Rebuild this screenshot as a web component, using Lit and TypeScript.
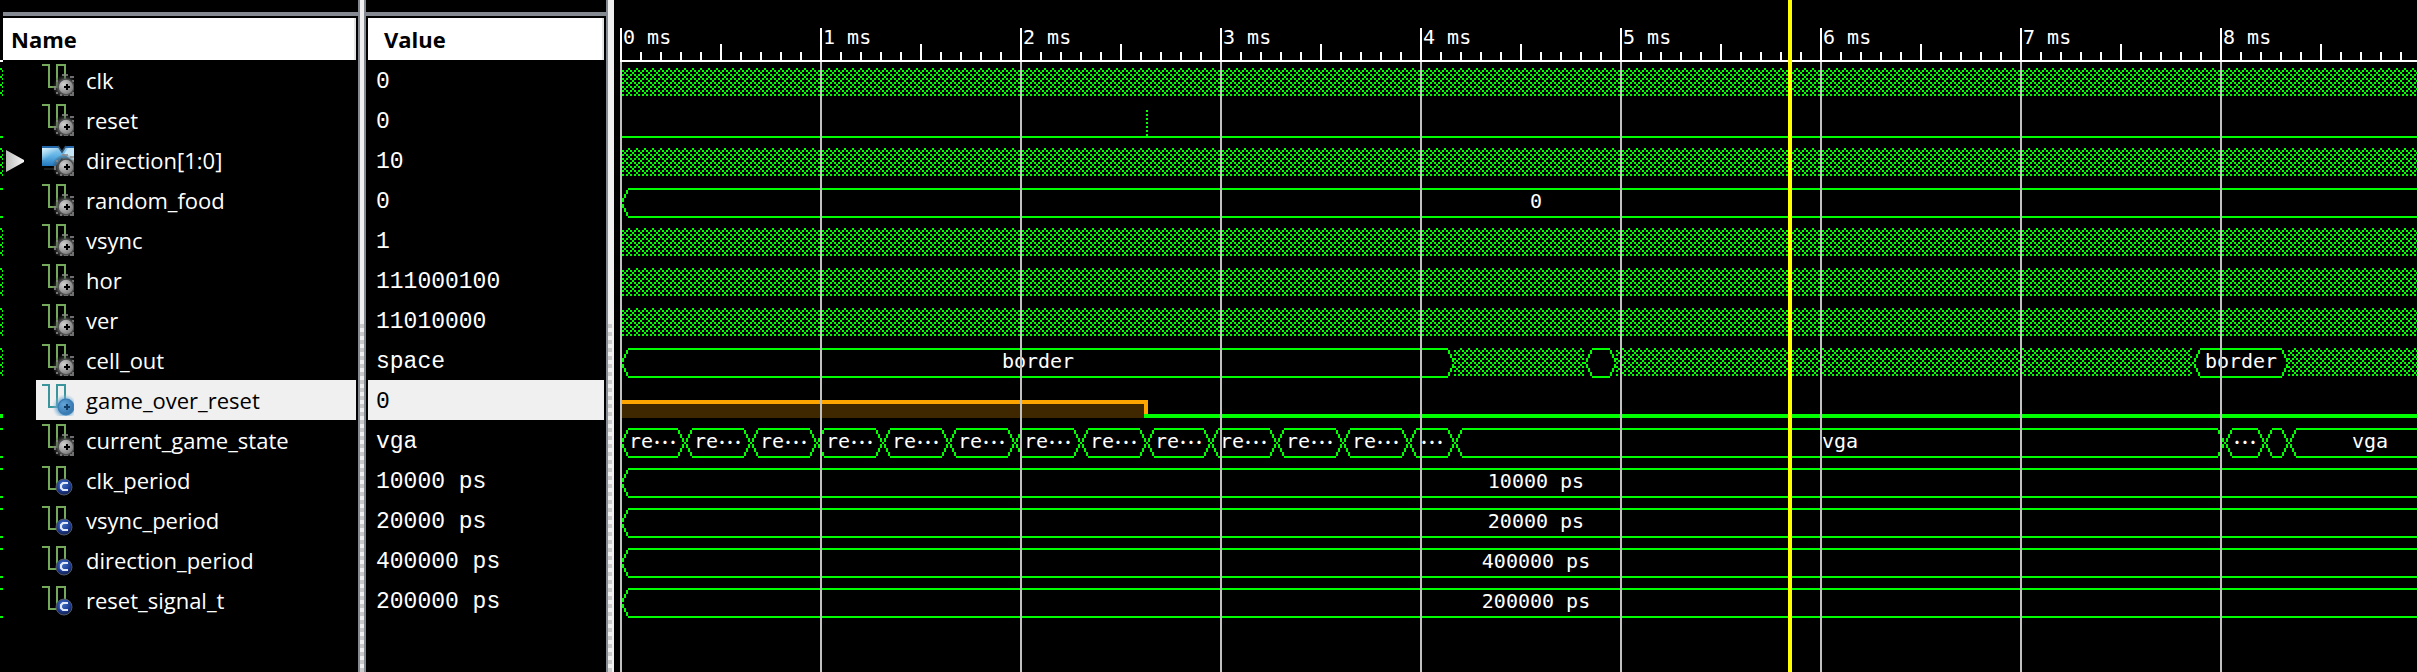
import { LitElement, html, css, svg, nothing } from "lit";
import { customElement, property, state } from "lit/decorators.js";
import { classMap } from "lit/directives/class-map.js";

type IconKind = "signal" | "vector" | "constant";
type Segment = { kind: "mesh" | "bus" | "rail" | "low" | "high" | "pulse"; end?: number; label?: string };
type Signal = { name: string; value: string; icon: IconKind; expandable?: boolean; trace: Segment[] };

/* Horizontal scale: pixels for one millisecond. */
const PX_PER_MS = 200;
const CURSOR_MS = 5.84;

const mesh: Segment[] = [{ kind: "mesh" }];
const constant = (label: string): Segment[] => [{ kind: "bus", label }];

const SIGNALS: Signal[] = [
  { name: "clk", value: "0", icon: "signal", trace: mesh },
  { name: "reset", value: "0", icon: "signal", trace: [{ kind: "low", end: 526 }, { kind: "pulse", end: 528 }, { kind: "low" }] },
  { name: "direction[1:0]", value: "10", icon: "vector", expandable: true, trace: mesh },
  { name: "random_food", value: "0", icon: "signal", trace: constant("0") },
  { name: "vsync", value: "1", icon: "signal", trace: mesh },
  { name: "hor", value: "111000100", icon: "signal", trace: mesh },
  { name: "ver", value: "11010000", icon: "signal", trace: mesh },
  {
    name: "cell_out", value: "space", icon: "signal",
    trace: [
      { kind: "bus", end: 834, label: "border" },
      { kind: "mesh", end: 964 },
      { kind: "bus", end: 996 },
      { kind: "mesh", end: 1572 },
      { kind: "bus", end: 1668, label: "border" },
      { kind: "mesh" },
    ],
  },
  { name: "game_over_reset", value: "0", icon: "signal", trace: [{ kind: "high", end: 528 }, { kind: "low" }] },
  {
    name: "current_game_state", value: "vga", icon: "signal",
    trace: [
      ...[64, 130, 196, 262, 328, 394, 460, 526, 590, 656, 722, 788].map(
        (end): Segment => ({ kind: "bus", end, label: "re…" })
      ),
      { kind: "bus", end: 834, label: "…" },
      { kind: "bus", end: 1604, label: "vga" },
      { kind: "bus", end: 1644, label: "…" },
      { kind: "bus", end: 1668 },
      { kind: "bus", label: "vga" },
    ],
  },
  { name: "clk_period", value: "10000 ps", icon: "constant", trace: constant("10000 ps") },
  { name: "vsync_period", value: "20000 ps", icon: "constant", trace: constant("20000 ps") },
  { name: "direction_period", value: "400000 ps", icon: "constant", trace: constant("400000 ps") },
  { name: "reset_signal_t", value: "200000 ps", icon: "constant", trace: constant("200000 ps") },
];

@customElement("signal-icon")
export class SignalIcon extends LitElement {
  @property() kind: IconKind = "signal";
  @property({ type: Boolean }) selected = false;

  static styles = css`
    :host { display: block; width: 32px; height: 32px; }
    .art { display: block; }
  `;

  private wave() {
    return svg`<path d="M0 .5H3.5V11.5H7.5V.5H11.5V8" fill="none" stroke="${this.selected ? "#3a949c" : "#74a95c"}" shape-rendering="crispEdges"/>`;
  }

  private gear() {
    const on = this.selected;
    return svg`
      <defs>
        <radialGradient id="glow" cx="11.5" cy="11.5" r="6.5" gradientUnits="userSpaceOnUse">
          <stop offset=".5" stop-color="${on ? "#4f94c6" : "#6a6a6a"}" stop-opacity=".9"/>
          <stop offset="1" stop-color="${on ? "#9cc8e4" : "#2a2a2a"}" stop-opacity="0"/>
        </radialGradient>
        <radialGradient id="disc" cx="10.8" cy="10.3" r="4.6" gradientUnits="userSpaceOnUse">
          <stop offset="0" stop-color="${on ? "#62a5d8" : "#d2d2d2"}"/>
          <stop offset="1" stop-color="${on ? "#3a7ab2" : "#858585"}"/>
        </radialGradient>
      </defs>
      <circle cx="11.5" cy="11.5" r="6.5" fill="url(#glow)"/>
      ${on ? nothing : svg`<path d="M10 5.5h3M14 6.5h2M7 8.5h1M15.5 8v1M6.5 11v2M7 14.5h1M9 15.5h1M11 15.5h2M14 15.5h2M15.5 11v2M15 14.5h1" stroke="#8a8a8a" stroke-opacity=".8" shape-rendering="crispEdges"/>`}
      <circle cx="12" cy="11.5" r="3.9" fill="url(#disc)" stroke="${on ? "#3b7fb6" : "#4c4c4c"}" stroke-width=".6"/>
      <path d="M12.5 10v3M11 11.5h3" stroke="${on ? "#123d66" : "#000"}" shape-rendering="crispEdges"/>`;
  }

  private badge() {
    return svg`
      <defs>
        <radialGradient id="ball" cx="10.5" cy="9" r="5" gradientUnits="userSpaceOnUse">
          <stop offset="0" stop-color="#3f6cc4"/>
          <stop offset=".7" stop-color="#1c3c94"/>
          <stop offset="1" stop-color="#15265c"/>
        </radialGradient>
      </defs>
      <circle cx="11" cy="10.5" r="4" fill="url(#ball)" stroke="#55585f" stroke-width=".5"/>
      <path d="M13 8.5H10.5L9.5 9.5V11L10.5 12H13" fill="none" stroke="#dfe8f8" stroke-width="1.1"/>`;
  }

  private bus() {
    return svg`
      <defs>
        <linearGradient id="sky" x1="0" y1="0" x2="0" y2="1">
          <stop offset="0" stop-color="#9fd4f2"/>
          <stop offset=".5" stop-color="#5fb1e4"/>
          <stop offset="1" stop-color="#2277bd"/>
        </linearGradient>
        <linearGradient id="shine" x1="0" y1="0" x2="1" y2="1">
          <stop offset="0" stop-color="#e2f5fd" stop-opacity=".9"/>
          <stop offset=".6" stop-color="#e2f5fd" stop-opacity="0"/>
        </linearGradient>
      </defs>
      <path d="M0 1H8L10 4L12 1H16V11H12L10 7L7 11H0Z" fill="url(#sky)"/>
      <path d="M0 2H8L6 8H0Z" fill="url(#shine)"/>
      <path d="M11 5L13 2H16V9Z" fill="#c4e6f7"/>
      <path d="M0 1.5H8M12 1.5H16" stroke="#2468ac" shape-rendering="crispEdges"/>
      <path d="M8 1L10 4L12 1" stroke="#33526c" fill="none" stroke-width=".8"/>
      <path d="M1 12.5H7" stroke="#1c1c1c"/>`;
  }

  render() {
    const body =
      this.kind === "vector" ? svg`${this.bus()}${this.gear()}`
      : this.kind === "constant" ? svg`<g transform="translate(0 1)">${this.wave()}${this.badge()}</g>`
      : svg`${this.wave()}${this.gear()}`;
    return html`<svg class="art" viewBox="0 0 16 16" width="32" height="32" aria-hidden="true">${body}</svg>`;
  }
}

@customElement("signal-trace")
export class SignalTrace extends LitElement {
  @property({ attribute: false }) trace: Segment[] = [];
  @property({ type: Boolean }) selected = false;

  static styles = css`
    :host { display: flex; height: 40px; align-items: flex-start; }
    .seg { flex: none; display: flex; height: 30px; box-sizing: border-box; }
    .seg.rest { flex: 1 1 0; min-width: 0; }
    .cap { flex: none; display: block; }
    .body {
      flex: 1; min-width: 0; height: 30px; box-sizing: border-box;
      border-top: 2px solid #0f0; border-bottom: 2px solid #0f0;
      display: flex; justify-content: center;
      color: #fff; white-space: nowrap;
      font: 20px/22px "DejaVu Sans Mono", monospace;
    }
    .dots { font: 24px/22px "Noto Sans CJK SC", sans-serif; }
    .fill { display: block; width: 100%; height: 28px; }
    .rail { border-top: 2px solid #0f0; border-bottom: 2px solid #0f0; }
    .low { border-bottom: 2px solid #0f0; }
    .pulse {
      margin-top: 2px; height: 28px; border-bottom: 2px solid #0f0;
      background: repeating-linear-gradient(#0f0 0 2px, #000 2px 4px);
    }
    .low.strong { border-bottom-width: 4px; }
    .high { padding-top: 12px; }
    .level { flex: 1; height: 14px; border-top: 4px solid #ffa500; background: #3f2800; }
    .edge { width: 4px; height: 14px; background: #ffa500; border-bottom: 4px solid #0f0; }
  `;

  private bus(label?: string) {
    const dots = label?.endsWith("…");
    const text = dots ? label!.slice(0, -1) : label;
    return html`
      <svg class="cap" width="8" height="30" fill="#0f0" shape-rendering="crispEdges" aria-hidden="true">
        <path d="M6 2H8V6H6ZM4 6H6V10H4ZM2 10H4V14H2ZM0 14H2V16H0ZM2 16H4V20H2ZM4 20H6V24H4ZM6 24H8V28H6Z"/>
      </svg>
      <div class="body">${text ? html`<span>${text}</span>` : nothing}${dots ? html`<span class="dots">…</span>` : nothing}</div>
      <svg class="cap" width="6" height="30" fill="#0f0" shape-rendering="crispEdges" aria-hidden="true">
        <path d="M0 2H2V6H0ZM2 6H4V10H2ZM4 10H6V14H4ZM4 16H6V20H4ZM2 20H4V24H2ZM0 24H2V28H0Z"/>
      </svg>`;
  }

  private fill(start: number) {
    return html`
      <svg class="fill" fill="#0f0" shape-rendering="crispEdges" aria-hidden="true">
        <defs>
          <pattern id="mesh" x=${-(start % 8)} width="8" height="8" patternUnits="userSpaceOnUse">
            <path d="M0 0h2v2H0ZM2 2h2v2H2ZM6 2h2v2H6ZM4 4h2v2H4ZM2 6h2v2H2ZM6 6h2v2H6Z"/>
          </pattern>
        </defs>
        <rect width="100%" height="28" fill="url(#mesh)"/>
      </svg>`;
  }

  render() {
    let start = 0;
    return this.trace.map((s) => {
      const from = start;
      start = s.end ?? start;
      const classes = classMap({
        seg: true,
        rest: s.end === undefined,
        rail: s.kind === "rail",
        low: s.kind === "low",
        strong: s.kind === "low" && this.selected,
        high: s.kind === "high",
        pulse: s.kind === "pulse",
      });
      const content =
        s.kind === "bus" ? this.bus(s.label)
        : s.kind === "mesh" ? this.fill(from)
        : s.kind === "high" ? html`<div class="level"></div><div class="edge"></div>`
        : nothing;
      return s.end === undefined
        ? html`<div class=${classes}>${content}</div>`
        : html`<div class=${classes} style="width:${s.end - from}px">${content}</div>`;
    });
  }
}

@customElement("app-root")
export class AppRoot extends LitElement {
  @state() private selected = "game_over_reset";

  static styles = css`
    :host { display: block; background: #000; color: #fff; overflow: hidden; }
    .viewer { display: flex; min-height: 100vh; }

    .sliver { flex: none; width: 3px; overflow: hidden; padding-top: 60px; box-sizing: border-box; }
    .sliver-lanes { border-top: 2px solid #fff; padding-top: 6px; }

    .pane { flex: none; padding-top: 12px; box-sizing: border-box; }
    .names { width: 355px; }
    .values { width: 240px; }
    .head {
      margin: 0; height: 48px; box-sizing: border-box; padding-top: 2px;
      border-top: 4px solid #858a92;
    }
    .title {
      display: block; height: 42px; box-sizing: border-box; margin-right: 2px;
      background: #fff; color: #000; border-right: 2px solid #e4e4e4;
      font: bold 22px/42px "Open Sans", "Noto Sans", sans-serif; padding-left: 8px;
    }
    .values .title { margin-left: 2px; padding-left: 16px; }
    .list { list-style: none; margin: 0; padding: 0; }
    .row { display: flex; height: 40px; }
    .toggle {
      flex: none; width: 33px; padding: 2px 0 0 3px; border: 0; background: none;
      display: flex; align-items: center;
    }
    .gutter { flex: none; width: 33px; }
    .item {
      flex: 1; display: flex; align-items: center; gap: 12px;
      margin: 0 2px 0 0; padding: 0 0 0 6px; border: 0; background: none; color: #fff;
      font: 22px/32px "Open Sans", "Noto Sans", sans-serif; text-align: left; white-space: nowrap;
    }
    .value {
      flex: 1; height: 40px; margin: 0 2px; padding-left: 8px;
      font: 23px/44px "Liberation Mono", monospace; white-space: pre;
    }
    .on .item, .on .value { background: #f0f0f0; color: #000; }

    .splitter { flex: none; width: 8px; box-sizing: border-box; border-left: 2px solid #858a92; background: #f0f0f0; }
    .splitter.inner { border-right: 2px solid #858a92; }
    .grip {
      width: 4px; margin-top: 320px; height: calc(100% - 320px);
      background: repeating-linear-gradient(#f0f0f0 0 4px, #cacaca 4px 8px);
    }

    .waves { flex: 1; min-width: 0; padding-left: 6px; overflow: hidden; }
    .canvas { position: relative; min-height: 100%; }
    .ruler {
      height: 62px; box-sizing: border-box; padding-top: 28px; border-bottom: 2px solid #fff;
      background:
        repeating-linear-gradient(90deg, #fff 0 2px, transparent 2px 20px) 0 52px / 100% 8px no-repeat,
        repeating-linear-gradient(90deg, #fff 0 2px, transparent 2px 100px) 0 44px / 100% 16px no-repeat;
    }
    .marks { display: flex; height: 32px; }
    .mark {
      flex: none; box-sizing: border-box; border-left: 2px solid #fff; padding-left: 1px;
      font: 20px/18px "DejaVu Sans Mono", monospace; white-space: pre;
    }
    /* The last segments run on past the visible edge of the pane. */
    .lanes { padding-top: 6px; margin-right: -33px; }
    .grid {
      position: absolute; inset: 62px 0 0 0; pointer-events: none;
      background: repeating-linear-gradient(90deg, #c0c0c0 0 2px, transparent 2px 200px);
    }
    .cursor { position: absolute; top: 0; bottom: 0; width: 4px; background: #ff0; }
  `;

  /* What the strip at the far left shows of a signal: only its idle outline. */
  private outline(s: Signal): Segment[] {
    if (s.trace.length === 1) return [{ kind: s.trace[0].kind === "mesh" ? "mesh" : "rail" }];
    if (s.name === "cell_out") return [{ kind: "mesh" }];
    return [{ kind: s.trace[0].kind === "bus" ? "rail" : "low" }];
  }

  private lanes(full: boolean) {
    return SIGNALS.map((s) => html`
      <signal-trace
        .trace=${full ? s.trace : this.outline(s)}
        ?selected=${s.name === this.selected}
      ></signal-trace>`);
  }

  render() {
    return html`
      <main class="viewer">
        <div class="sliver" aria-hidden="true"><div class="sliver-lanes">${this.lanes(false)}</div></div>

        <section class="pane names">
          <h2 class="head"><span class="title">Name</span></h2>
          <ul class="list">
            ${SIGNALS.map((s) => html`
              <li class=${classMap({ row: true, on: s.name === this.selected })}>
                ${s.expandable
                  ? html`<button class="toggle" aria-label="Expand">
                      <svg width="18" height="22" aria-hidden="true">
                        <defs><linearGradient id="tri"><stop offset="0" stop-color="#bdbdbd"/><stop offset="1" stop-color="#f6f6f6"/></linearGradient></defs>
                        <path d="M0 0L18 10V12L0 22Z" fill="url(#tri)"/>
                      </svg>
                    </button>`
                  : html`<span class="gutter"></span>`}
                <button class="item" @click=${() => (this.selected = s.name)}>
                  <signal-icon kind=${s.icon} ?selected=${s.name === this.selected}></signal-icon>
                  <span>${s.name}</span>
                </button>
              </li>`)}
          </ul>
        </section>

        <div class="splitter inner"><div class="grip"></div></div>

        <section class="pane values">
          <h2 class="head"><span class="title">Value</span></h2>
          <ul class="list">
            ${SIGNALS.map((s) => html`
              <li class=${classMap({ row: true, on: s.name === this.selected })}>
                <span class="value">${s.value}</span>
              </li>`)}
          </ul>
        </section>

        <div class="splitter"><div class="grip"></div></div>

        <section class="waves">
          <div class="canvas">
            <div class="ruler">
              <div class="marks">
                ${[0, 1, 2, 3, 4, 5, 6, 7, 8].map((n) => html`<div class="mark" style="width:${PX_PER_MS}px">${n} ms</div>`)}
              </div>
            </div>
            <div class="lanes">${this.lanes(true)}</div>
            <div class="grid"></div>
            <div class="cursor" style="left:${CURSOR_MS * PX_PER_MS}px"></div>
          </div>
        </section>
      </main>
    `;
  }
}
